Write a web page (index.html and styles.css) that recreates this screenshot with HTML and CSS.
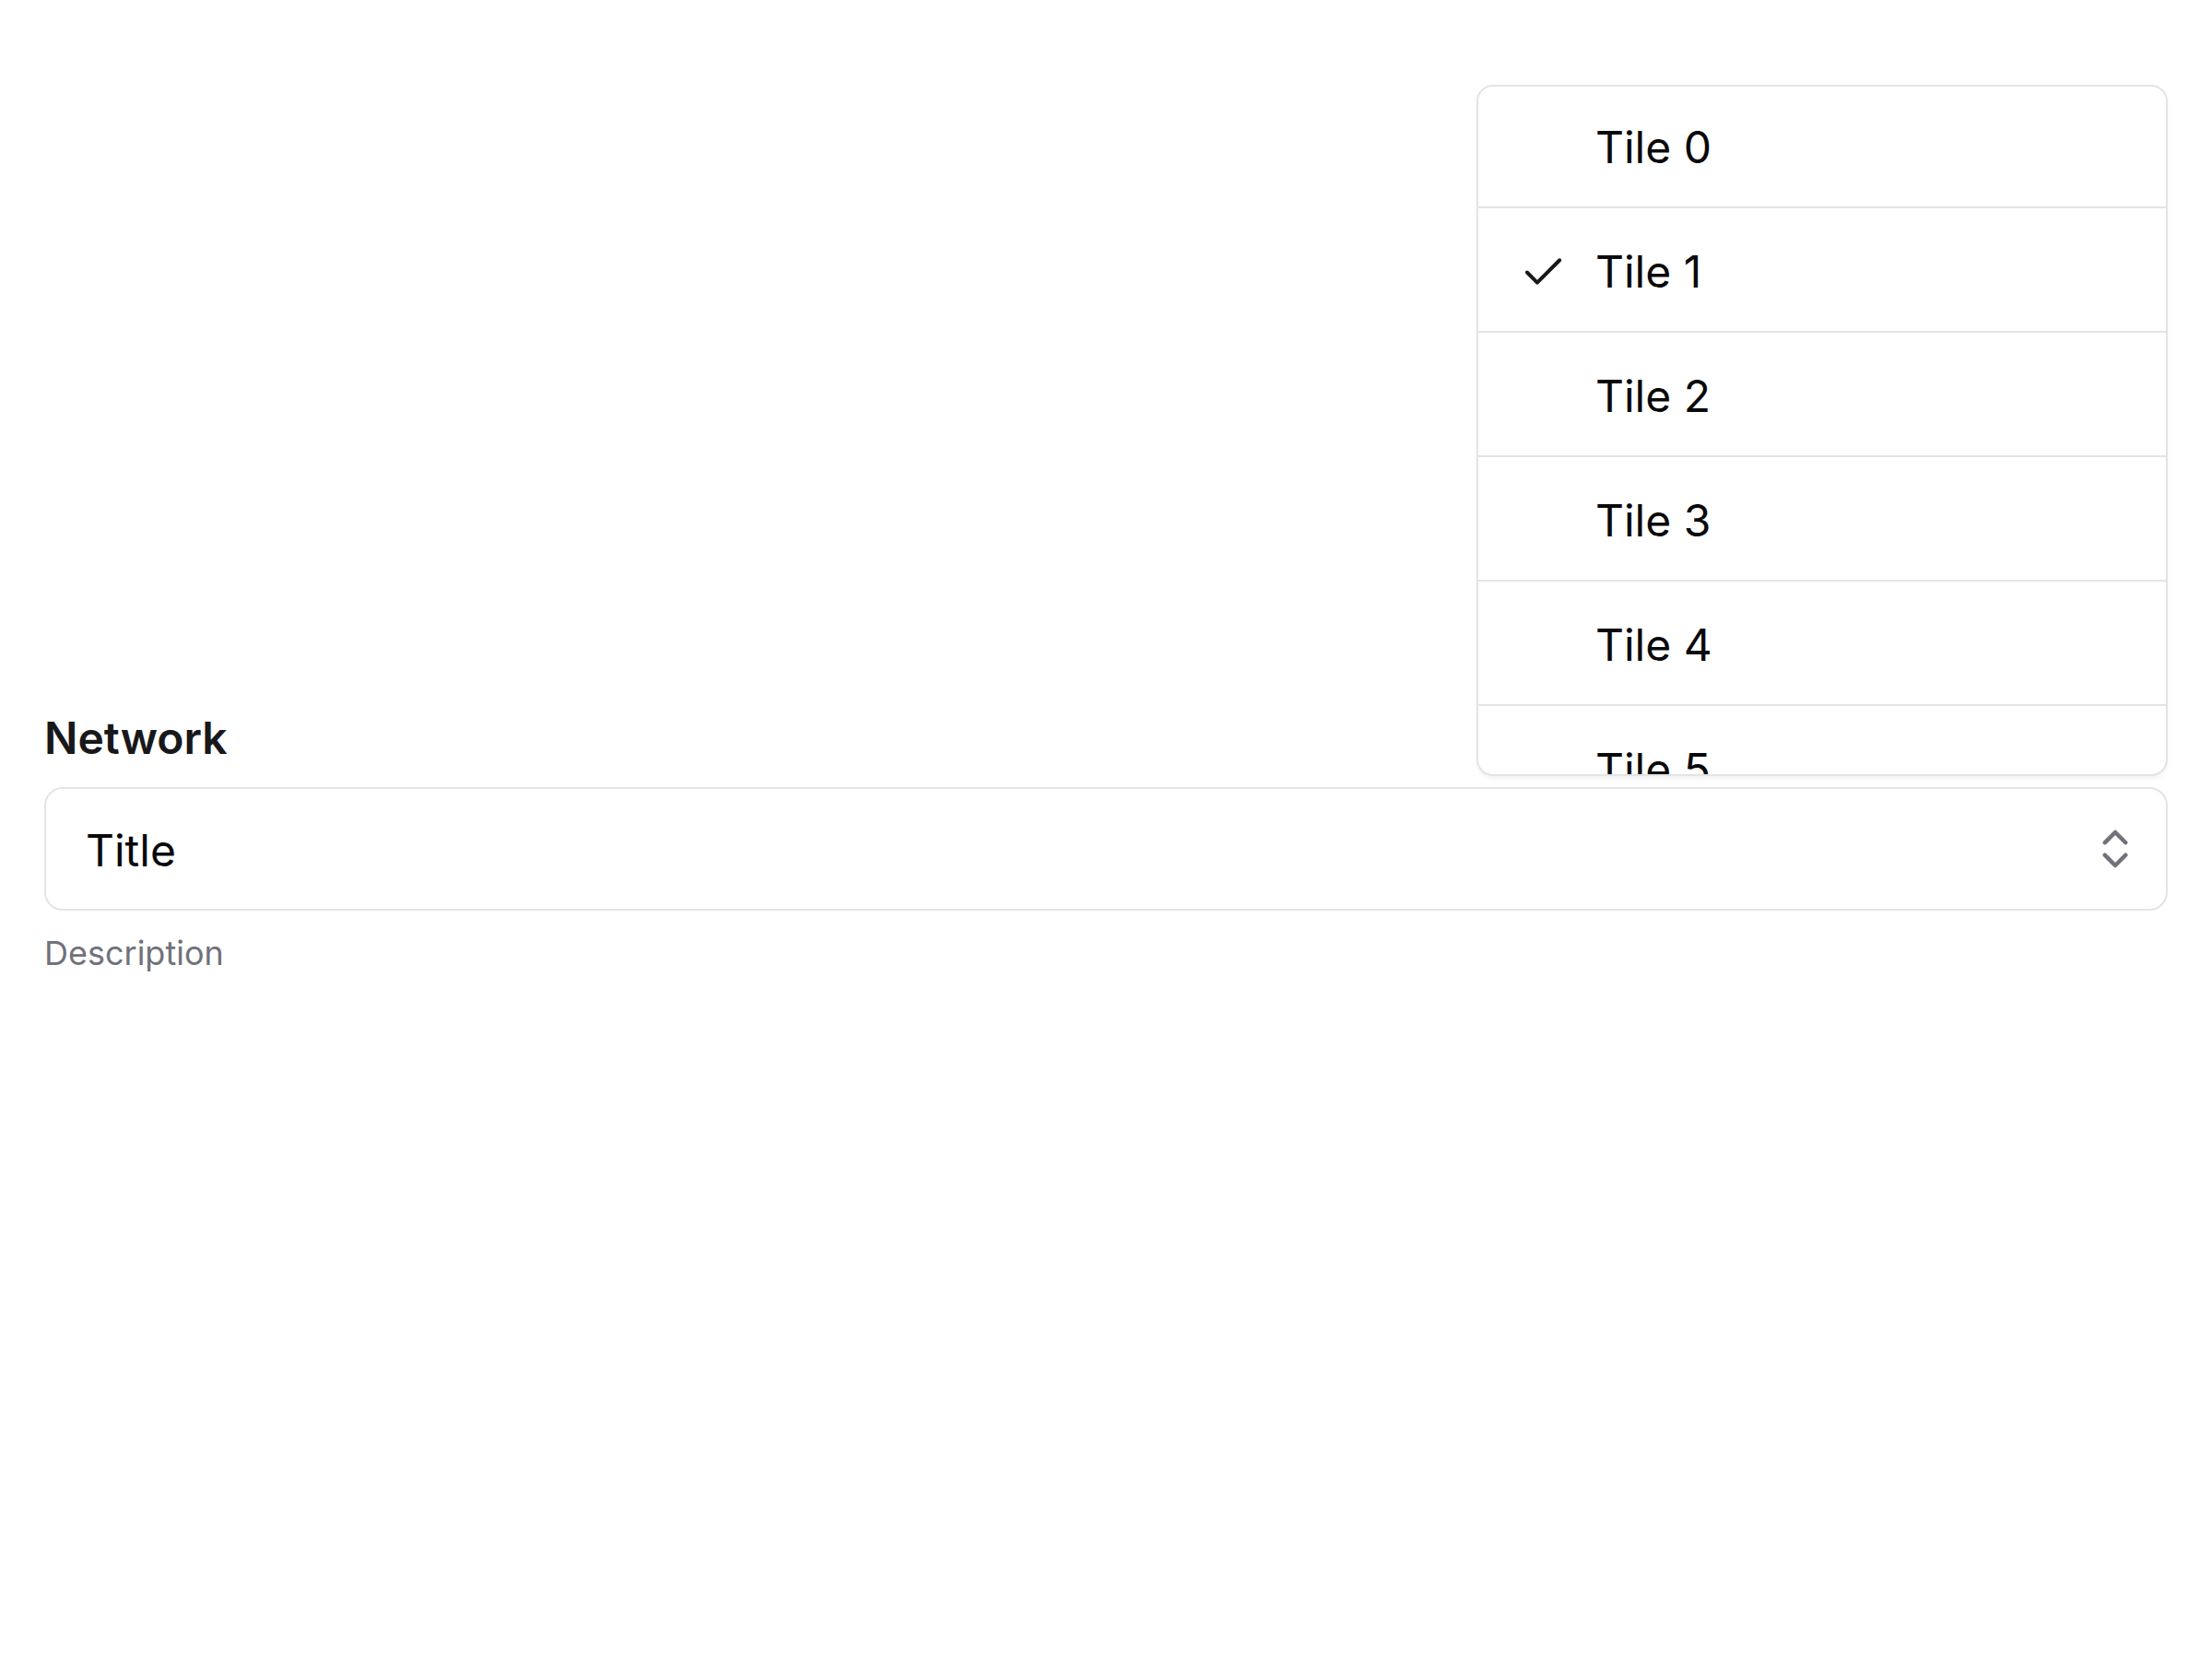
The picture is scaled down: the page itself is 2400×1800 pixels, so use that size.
FILE: index.html
```html
<!DOCTYPE html>
<html lang="en">
<head>
<meta charset="utf-8">
<title>Network select</title>
<link rel="stylesheet" href="styles.css">
</head>
<body>
<main class="page">
  <div class="field">
    <label class="field-label">Network</label>
    <div class="select-wrap">
      <div class="select">
        <span class="select-value">Title</span>
        <svg class="chevrons" viewBox="0 0 24 24" fill="none" stroke="currentColor" stroke-width="2" stroke-linecap="round" stroke-linejoin="round"><path d="m7 15 5 5 5-5"/><path d="m7 9 5-5 5 5"/></svg>
      </div>
      <div class="menu">
        <ul class="menu-list">
          <li class="menu-item"><span class="check-slot"></span><span>Tile 0</span></li>
          <li class="menu-item selected"><span class="check-slot"><svg class="check" viewBox="0 0 24 24" fill="none" stroke="currentColor" stroke-width="1.8" stroke-linecap="round" stroke-linejoin="round"><path d="M20 6 9 17l-5-5"/></svg></span><span>Tile 1</span></li>
          <li class="menu-item"><span class="check-slot"></span><span>Tile 2</span></li>
          <li class="menu-item"><span class="check-slot"></span><span>Tile 3</span></li>
          <li class="menu-item"><span class="check-slot"></span><span>Tile 4</span></li>
          <li class="menu-item"><span class="check-slot"></span><span>Tile 5</span></li>
        </ul>
      </div>
    </div>
    <p class="field-desc">Description</p>
  </div>
</main>
</body>
</html>
```
FILE: styles.css
```css
* { box-sizing: border-box; }
html, body { margin: 0; padding: 0; background: #ffffff; }
body {
  font-family: Inter, "Noto Sans", "Liberation Sans", sans-serif;
  color: #09090b;
}
.page {
  padding: 765px 48px 0 48px;
}
.field {
  display: flex;
  flex-direction: column;
}
.field-label {
  font-size: 48px;
  line-height: 72px;
  font-weight: 600;
  color: #18181b;
  margin-bottom: 17px;
}
.select-wrap {
  position: relative;
}
.select {
  height: 134px;
  border: 2px solid #e4e4e7;
  border-radius: 20px;
  display: flex;
  align-items: center;
  justify-content: space-between;
  padding: 0 28px 0 43px;
  background: #fff;
}
.select-value {
  font-size: 48px;
  line-height: 72px;
  padding-top: 4px;
}
.chevrons {
  width: 54px;
  height: 54px;
  color: #71717a;
}
.field-desc {
  margin: 19px 0 0 0;
  font-size: 36px;
  line-height: 54px;
  color: #71717a;
}
.menu {
  position: absolute;
  right: 0;
  bottom: calc(100% + 12px);
  width: 750px;
  height: 750px;
  border: 2px solid #e4e4e7;
  border-radius: 18px;
  background: #fff;
  overflow: hidden;
  box-shadow: 0 3px 5px rgba(0, 0, 0, 0.05);
}
.menu-list {
  list-style: none;
  margin: -3px 0 0 0;
  padding: 0;
}
.menu-item {
  height: 135px;
  border-bottom: 2px solid #e4e4e7;
  display: flex;
  align-items: flex-start;
  padding: 33px 0 0 44px;
  font-size: 48px;
  line-height: 72px;
}
.check-slot {
  width: 53px;
  height: 72px;
  margin-right: 30px;
  display: flex;
  align-items: center;
  justify-content: center;
  flex: none;
}
.check {
  width: 53px;
  height: 53px;
  color: #18181b;
}
```
